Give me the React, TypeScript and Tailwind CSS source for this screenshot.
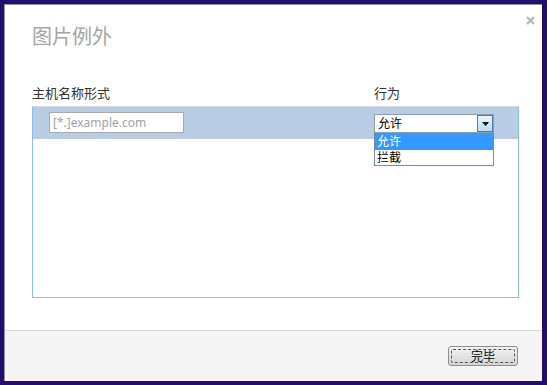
import React from "react";

export default function App() {
  const font = { fontFamily: '"Noto Sans", "Noto Sans CJK SC", sans-serif' };
  return (
    <div className="w-[547px] h-[385px] bg-[#230c6b] pl-[4px] pt-[4px] overflow-hidden" style={font}>
      <div className="w-[538px] h-[377px] bg-white flex flex-col border-l border-t border-[#8d9a9a] relative">
        <svg className="absolute left-[521px] top-[11px]" width="9" height="9" viewBox="0 0 9 9">
          <path d="M1 1L8 8M8 1L1 8" stroke="#b3b3b3" strokeWidth="2" />
        </svg>
        <div className="flex-1 pl-[27px]">
          <div className="pt-[18px] text-[20px] leading-[28px] text-[#a6a6a6]">图片例外</div>
          <div className="mt-[33px] flex text-[13px] leading-[18px] text-[#333]">
            <div className="w-[342px]">主机名称形式</div>
            <div>行为</div>
          </div>
          <div className="mt-[4px] w-[487px] h-[192px] border-t border-t-[#d8d8d8] border-x border-b border-[#86bff2] relative">
            <div className="h-[32px] bg-[#b8cce4] flex items-start">
              <div className="ml-[16px] mt-[5px] w-[135px] h-[21px] border border-[#a9a9a9] bg-white text-[12px] leading-[19px] pl-[3px] text-[#a3a3a3]">
                [*.]example.com
              </div>
              <div className="ml-[190px] mt-[7px] relative">
                <div className="w-[120px] h-[19px] border border-[#8d9db0] bg-white flex items-center">
                  <span className="flex-1 text-[12px] leading-[17px] pl-[3px] text-black">允许</span>
                  <div className="w-[16px] h-[17px] border border-[#4f7bb0] bg-gradient-to-b from-[#eaf5fd] to-[#b9dcf5] flex items-center justify-center">
                    <svg width="7" height="4" viewBox="0 0 7 4"><path d="M0 0h7L3.5 4z" fill="#000" /></svg>
                  </div>
                </div>
                <div className="absolute left-0 top-[19px] w-[120px] h-[33px] border border-[#7a8aa0] bg-white text-[12px] z-10">
                  <div className="h-[16px] leading-[16px] bg-[#3399ff] text-white pl-[2px]">允许</div>
                  <div className="h-[15px] leading-[15px] text-black pl-[2px]">拦截</div>
                </div>
              </div>
            </div>
          </div>
        </div>
        <div className="h-[51px] bg-[#f5f5f5] border-t border-[#dadada] flex items-start justify-end pr-[24px]">
          <button className="mt-[15px] w-[70px] h-[20px] rounded-[3px] border border-[#8f8f8f] bg-gradient-to-b from-[#f4f4f4] to-[#d4d4d4] flex items-center justify-center p-[2px]">
            <span className="w-full h-full border border-dashed border-[#555] rounded-[2px] text-[12px] leading-[13px] text-black flex items-center justify-center">完毕</span>
          </button>
        </div>
      </div>
    </div>
  );
}
